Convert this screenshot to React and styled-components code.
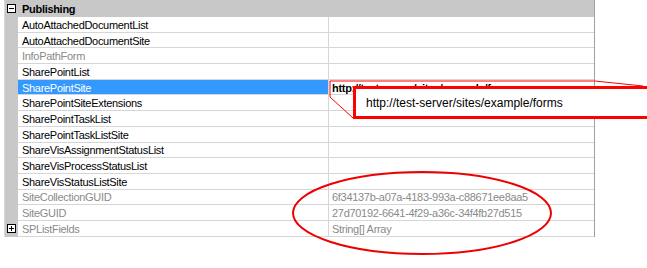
import styled, { createGlobalStyle } from "styled-components";

const GlobalStyle = createGlobalStyle`
  body {
    margin: 0;
    background: #fff;
    font-family: "Liberation Sans", Arial, sans-serif;
  }
`;

const Frame = styled.div`
  position: relative;
  width: 647px;
  height: 268px;
  overflow: hidden;
  background: #fff;
`;

const Grid = styled.div`
  margin-left: 4px;
  width: 589px;
  border-left: 1px solid #d8d8d8;
  border-right: 1px solid #a0a0a0;
  font-size: 11px;
  letter-spacing: -0.3px;
`;

const CategoryRow = styled.div`
  display: flex;
  align-items: center;
  height: 17px;
  background: #c8c8c8;
  font-weight: bold;
  color: #000;
`;

const Gutter = styled.div`
  width: 13px;
  flex: none;
  display: flex;
  align-items: center;
  justify-content: center;
  align-self: stretch;
  background: #c8c8c8;
`;

const Expander = styled.span`
  position: relative;
  width: 7px;
  height: 7px;
  border: 1px solid #000;
  background: #fff;
  &::before,
  &::after {
    content: "";
    position: absolute;
    background: #000;
  }
  &::before {
    left: 1px;
    right: 1px;
    top: 3px;
    height: 1px;
  }
  &::after {
    display: ${(p) => (p.$open ? "none" : "block")};
    top: 1px;
    bottom: 1px;
    left: 3px;
    width: 1px;
  }
`;

const CategoryLabel = styled.span`
  padding-left: 4px;
`;

const PropRow = styled.div`
  display: grid;
  grid-template-columns: 13px 311px 1fr;
  height: 15.7px;
`;

const NameCell = styled.div`
  display: flex;
  align-items: center;
  padding: 1px 0 0 4px;
  white-space: nowrap;
  overflow: hidden;
  border-bottom: 1px solid #d6d6d6;
  border-right: 1px solid #d6d6d6;
  background: ${(p) => (p.$selected ? "#3399ff" : "#fff")};
  color: ${(p) => (p.$selected ? "#fff" : p.$readOnly ? "#8a8a8a" : "#000")};
`;

const ValueCell = styled.div`
  display: flex;
  align-items: center;
  padding: 1px 0 0 3px;
  white-space: nowrap;
  overflow: hidden;
  border-bottom: 1px solid #d6d6d6;
  color: ${(p) => (p.$readOnly ? "#8a8a8a" : "#000")};
  font-weight: ${(p) => (p.$bold ? "bold" : "normal")};
`;

const Overlay = styled.svg`
  position: absolute;
  left: 0;
  top: 0;
  pointer-events: none;
`;

const Callout = styled.div`
  position: absolute;
  left: 353px;
  top: 86px;
  width: 284px;
  height: 27px;
  border: 3px solid #ff0000;
  background: #fff;
  display: flex;
  align-items: center;
  padding-left: 10px;
  box-sizing: content-box;
  font-size: 12px;
  color: #000;
`;

const props = [
  { name: "AutoAttachedDocumentList" },
  { name: "AutoAttachedDocumentSite" },
  { name: "InfoPathForm", readOnly: true },
  { name: "SharePointList" },
  {
    name: "SharePointSite",
    selected: true,
    value: "http://test-server/sites/example/forms",
    bold: true,
  },
  { name: "SharePointSiteExtensions" },
  { name: "SharePointTaskList" },
  { name: "SharePointTaskListSite" },
  { name: "ShareVisAssignmentStatusList" },
  { name: "ShareVisProcessStatusList" },
  { name: "ShareVisStatusListSite" },
  {
    name: "SiteCollectionGUID",
    readOnly: true,
    value: "6f34137b-a07a-4183-993a-c88671ee8aa5",
  },
  {
    name: "SiteGUID",
    readOnly: true,
    value: "27d70192-6641-4f29-a36c-34f4fb27d515",
  },
  { name: "SPListFields", readOnly: true, value: "String[] Array", expandable: true },
];

const App = () => {
  return (
    <Frame>
      <GlobalStyle />
      <Grid>
        <CategoryRow>
          <Gutter>
            <Expander $open />
          </Gutter>
          <CategoryLabel>Publishing</CategoryLabel>
        </CategoryRow>
        {props.map((p) => (
          <PropRow key={p.name}>
            <Gutter>{p.expandable && <Expander />}</Gutter>
            <NameCell $selected={p.selected} $readOnly={p.readOnly}>
              {p.name}
            </NameCell>
            <ValueCell $readOnly={p.readOnly} $bold={p.bold}>
              {p.value}
            </ValueCell>
          </PropRow>
        ))}
      </Grid>

      <Overlay width="647" height="268" viewBox="0 0 647 268">
        <polyline
          points="330,81 595,81 643,86"
          fill="none"
          stroke="#ff0000"
          strokeWidth="1"
        />
        <polyline
          points="330,81 330,97 353,118"
          fill="none"
          stroke="#ff0000"
          strokeWidth="1"
        />
        <ellipse
          cx="422"
          cy="213"
          rx="129"
          ry="41"
          fill="none"
          stroke="#ee0000"
          strokeWidth="2"
        />
      </Overlay>
      <Callout>http://test-server/sites/example/forms</Callout>
    </Frame>
  );
};

export default App;
